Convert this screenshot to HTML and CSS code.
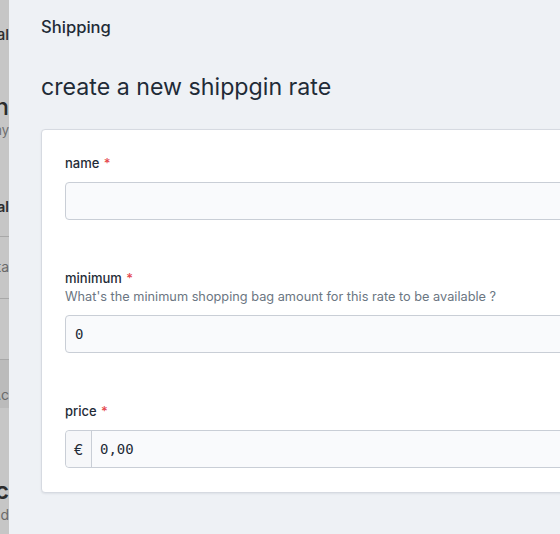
FILE: index.html
```html
<!DOCTYPE html>
<html lang="en">
<head>
<meta charset="utf-8">
<title>Shipping</title>
<link rel="stylesheet" href="styles.css">
</head>
<body>
<div class="page">
  <aside class="backdrop">
    <div class="bd-row bd-title">Journal</div>
    <div class="bd-row bd-big">Design</div>
    <div class="bd-row bd-sub">Company</div>
    <div class="bd-row bd-bold">Manual</div>
    <div class="bd-sep bd-sep1"></div>
    <div class="bd-row bd-grey">Data</div>
    <div class="bd-sep bd-sep2"></div>
    <div class="bd-sep bd-sep3"></div>
    <div class="bd-band"><span class="bd-row bd-grey">Ac</span></div>
    <div class="bd-row bd-big2">Ranc</div>
    <div class="bd-row bd-sub2">World</div>
  </aside>
  <main class="drawer">
    <div class="drawer-header">Shipping</div>
    <h1 class="drawer-title">create a new shippgin rate</h1>
    <section class="card">
      <div class="field">
        <label class="label">name <span class="req">*</span></label>
        <div class="input"></div>
      </div>
      <div class="field">
        <label class="label">minimum <span class="req">*</span></label>
        <div class="help">What's the minimum shopping bag amount for this rate to be available ?</div>
        <div class="input"><span class="value">0</span></div>
      </div>
      <div class="field">
        <label class="label">price <span class="req">*</span></label>
        <div class="input group">
          <span class="prefix">€</span>
          <span class="value">0,00</span>
        </div>
      </div>
    </section>
  </main>
</div>
</body>
</html>
```

FILE: styles.css
```css
* { box-sizing: border-box; }
html, body { margin: 0; padding: 0; }
body {
  width: 560px;
  height: 534px;
  overflow: hidden;
  font-family: Inter, "Noto Sans", "Liberation Sans", sans-serif;
  color: #1f2b37;
  background: #eef1f5;
}
.page {
  display: flex;
  height: 534px;
}
.backdrop {
  width: 9px;
  flex: 0 0 9px;
  background: #c6c6c6;
  overflow: hidden;
  display: flex;
  flex-direction: column;
}
.bd-row {
  display: flex;
  justify-content: flex-end;
  white-space: nowrap;
  overflow: hidden;
  color: #2c2c2c;
}
.bd-title { margin-top: 20px; height: 30px; line-height: 30px; font-size: 15px; font-weight: 500; }
.bd-big { margin-top: 42px; height: 30px; line-height: 30px; font-size: 24px; font-weight: 500; }
.bd-sub { height: 16px; line-height: 16px; font-size: 13px; color: #6e6e6e; }
.bd-bold { margin-top: 59px; height: 20px; line-height: 20px; font-size: 14px; font-weight: 600; }
.bd-sep { height: 1px; background: #a8a8a8; }
.bd-sep1 { margin-top: 19px; }
.bd-grey { height: 20px; line-height: 20px; font-size: 14px; color: #6a6a6a; }
.bd-sep1 + .bd-grey { margin-top: 20px; }
.bd-sep2 { margin-top: 21px; }
.bd-sep3 { margin-top: 60px; }
.bd-band {
  height: 48px;
  background: #bbbbbb;
  display: flex;
  flex-direction: column;
  justify-content: flex-end;
  padding-bottom: 3px;
}
.bd-big2 { margin-top: 68px; height: 30px; line-height: 30px; font-size: 24px; font-weight: 600; }
.bd-sub2 { height: 18px; line-height: 18px; font-size: 14px; color: #6a6a6a; }

.drawer {
  flex: 0 0 620px;
  width: 620px;
  background: #eef1f5;
  padding: 15px 0 0 32px;
}
.drawer-header {
  font-size: 16.6px;
  line-height: 24px;
  font-weight: 500;
  color: #1f2b37;
}
.drawer-title {
  margin: 33px 0 0;
  font-size: 23.2px;
  line-height: 30px;
  font-weight: 400;
  color: #1f2b37;
}
.card {
  margin-top: 27px;
  background: #ffffff;
  border: 1px solid #d6dae1;
  border-radius: 4px;
  box-shadow: 0 1px 2px rgba(30, 40, 60, 0.08);
  padding: 23px 0 24px 23px;
  display: flex;
  flex-direction: column;
  gap: 48px;
}
.field { display: flex; flex-direction: column; }
.label {
  font-size: 13px;
  line-height: 20px;
  font-weight: 500;
  color: #1f2b37;
  margin-bottom: 9px;
}
.req { color: #e5484d; margin-left: 1px; }
.label:has(+ .help) { margin-bottom: 0; }
.help {
  font-size: 12.75px;
  line-height: 18px;
  color: #6b7682;
  margin-bottom: 9px;
}
.input {
  height: 38px;
  width: 540px;
  background: #f9fafc;
  border: 1px solid #c9ced6;
  border-radius: 4px;
  display: flex;
  align-items: center;
  padding: 0 9px;
}
.value {
  font-family: "DejaVu Sans Mono", "Liberation Mono", monospace;
  font-size: 14px;
  color: #1f2b37;
}
.group { padding: 0; }
.prefix {
  width: 26px;
  height: 100%;
  display: flex;
  align-items: center;
  justify-content: center;
  border-right: 1px solid #c9ced6;
  background: #f6f7f9;
  border-radius: 4px 0 0 4px;
  font-size: 14px;
  color: #1f2b37;
  margin-right: 8px;
}
```
